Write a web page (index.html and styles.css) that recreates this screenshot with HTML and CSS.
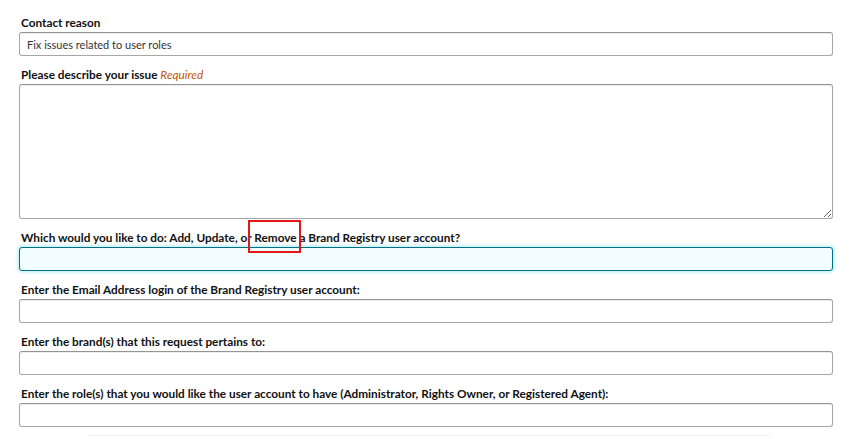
FILE: index.html
```html
<!DOCTYPE html>
<html lang="en">
  <head>
    <meta charset="UTF-8" />
    <meta name="viewport" content="width=device-width, initial-scale=1.0" />
    <title>Contact form</title>
    <link rel="stylesheet" href="styles.css">
  </head>
  <body>
    <div class="contact-form">
      <div class="field">
        <label for="reason">Contact reason</label>
        <input type="text" id="reason" value="Fix issues related to user roles" readonly />
      </div>
      <div class="field">
        <label for="issue">Please describe your issue <span class="required">Required</span></label>
        <textarea id="issue"></textarea>
      </div>
      <div class="field">
        <label for="action">Which would you like to do: Add, Update, or Remove a Brand Registry user account?</label>
        <input type="text" id="action" class="focused" />
      </div>
      <div class="field">
        <label for="email">Enter the Email Address login of the Brand Registry user account:</label>
        <input type="text" id="email" />
      </div>
      <div class="field">
        <label for="brands">Enter the brand(s) that this request pertains to:</label>
        <input type="text" id="brands" />
      </div>
      <div class="field last">
        <label for="roles">Enter the role(s) that you would like the user account to have (Administrator, Rights Owner, or Registered Agent):</label>
        <input type="text" id="roles" />
      </div>
      <div class="footer-line"></div>
    </div>

    <!-- annotation box -->
    <div class="highlight"></div>
  </body>
</html>
```

FILE: styles.css
```css
body {
  font-family: Lato, "Noto Sans", Arial, sans-serif;
  background-color: #fff;
  color: #111;
  margin: 0;
  padding: 0;
}
.contact-form {
  width: 814px;
  padding: 15px 0 0 19px;
}
.field {
  margin-bottom: 11px;
}
.field.last {
  margin-bottom: 8px;
}
.field label {
  display: block;
  font-size: 11.8px;
  font-weight: bold;
  line-height: 16px;
  margin: 0 0 1px 2px;
}
.required {
  font-weight: normal;
  font-style: italic;
  color: #c45500;
}
.field input,
.field textarea {
  display: block;
  width: 100%;
  height: 24px;
  padding: 0 7px;
  font-family: inherit;
  font-size: 11px;
  color: #333;
  border: 1px solid #a6a6a6;
  border-top-color: #949494;
  border-radius: 3px;
  box-shadow: 0 1px 0 rgba(255, 255, 255, 0.5), inset 0 1px 0 rgba(0, 0, 0, 0.07);
  box-sizing: border-box;
  outline: none;
}
.field textarea {
  height: 135px;
  resize: vertical;
}
.field input.focused {
  background-color: #f1fdfe;
  border-color: #007185;
  box-shadow: 0 0 3px 2px #c8f3fa;
}
.footer-line {
  width: 682px;
  margin-left: 69px;
  border-top: 1px solid #f0f0f0;
}
.highlight {
  position: absolute;
  left: 248px;
  top: 220px;
  width: 49px;
  height: 29px;
  border: 2px solid #e3181b;
}
```
